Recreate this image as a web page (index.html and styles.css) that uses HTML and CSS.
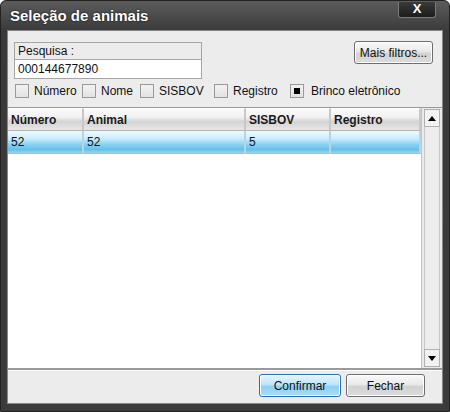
FILE: index.html
```html
<!DOCTYPE html>
<html>
<head>
<meta charset="utf-8">
<link rel="stylesheet" href="styles.css">
</head>
<body>
<div class="window">
  <div class="titlebar">
    <span class="title">Seleção de animais</span>
    <span class="close">X</span>
  </div>
  <div class="client">
    <div class="top">
      <div class="toprow">
        <div class="search">
          <div class="search-label">Pesquisa :</div>
          <div class="search-input">000144677890</div>
        </div>
        <button class="btn more">Mais filtros...</button>
      </div>
      <div class="checks">
        <span class="chk w1"><span class="box"></span>Número</span>
        <span class="chk w2"><span class="box"></span>Nome</span>
        <span class="chk w3"><span class="box"></span>SISBOV</span>
        <span class="chk w4"><span class="box"></span>Registro</span>
        <span class="chk"><span class="box checked"></span>Brinco eletrônico</span>
      </div>
    </div>
    <div class="grid">
      <div class="table">
        <div class="hrow">
          <div class="cell c1">Número</div>
          <div class="cell c2">Animal</div>
          <div class="cell c3">SISBOV</div>
          <div class="cell c4">Registro</div>
        </div>
        <div class="row sel">
          <div class="cell c1">52</div>
          <div class="cell c2">52</div>
          <div class="cell c3">5</div>
          <div class="cell c4"></div>
        </div>
      </div>
      <div class="scroll">
        <div class="arrow up"><span class="tri-up"></span></div>
        <div class="track"></div>
        <div class="arrow down"><span class="tri-down"></span></div>
      </div>
    </div>
    <div class="footer">
      <button class="btn confirm">Confirmar</button>
      <button class="btn close-btn">Fechar</button>
    </div>
  </div>
</div>
</body>
</html>
```
FILE: styles.css
```css
* { box-sizing: border-box; }
html, body { margin: 0; padding: 0; background: #ffffff; }
body { width: 450px; height: 412px; overflow: hidden; font-family: "Liberation Sans", Arial, sans-serif; }

.window {
  width: 450px; height: 412px;
  background: linear-gradient(#5c5c5c 0px, #3a3a3a 30px, #3b3b3b 100%);
  border: 1px solid #222;
  border-radius: 6px 6px 0 0;
  display: flex; flex-direction: column;
  padding: 0 6px 7px 6px;
}
.titlebar {
  height: 29px; flex: none;
  display: flex; align-items: flex-start; justify-content: space-between;
}
.title {
  color: #fff; font-weight: bold; font-size: 15px;
  margin: 6px 0 0 3px;
  text-shadow: 0 0 2px #000;
}
.close {
  width: 38px; height: 16px; margin: 1px 7px 0 0;
  background: linear-gradient(#3a3a3a, #1c1c1c);
  border: 1px solid #7a7a7a; border-top: none;
  border-radius: 0 0 3px 3px;
  color: #fff; font-weight: bold; font-size: 13px;
  text-align: center; line-height: 14px;
}
.client {
  flex: 1; background: #ececec;
  border: 1px solid #888;
  display: flex; flex-direction: column;
}
.top { padding: 11px 9px 0 6px; height: 76px; flex: none; }
.toprow { display: flex; justify-content: space-between; align-items: flex-start; }
.search {
  width: 188px; height: 37px;
  border: 1px solid #a6a6a6;
  background: #fff;
}
.search-label {
  height: 17px; background: #ececec; border-bottom: 1px solid #a6a6a6;
  font-size: 12px; color: #111; padding: 1px 0 0 3px; line-height: 15px;
}
.search-input { font-size: 12px; color: #111; padding: 1px 0 0 3px; line-height: 17px; }
.btn {
  font-family: "Liberation Sans", Arial, sans-serif;
  font-size: 12px; color: #111;
  border: 1px solid #6e6e6e; border-radius: 3px;
  background: linear-gradient(#fafafa 0%, #e9e9e9 45%, #d2d2d2 55%, #dcdcdc 100%);
  box-shadow: inset 0 0 0 1px #fff;
  padding: 0; margin: 0;
}
.more { width: 79px; height: 23px; margin-top: -1px; }
.checks { display: flex; align-items: center; margin-top: 3px; height: 17px; font-size: 12px; color: #111; padding-left: 1px; }
.chk { display: flex; align-items: center; flex: none; }
.w1 { width: 67px; }
.w2 { width: 58px; }
.w3 { width: 74px; }
.w4 { width: 76px; }
.box {
  width: 14px; height: 14px; border: 1px solid #9a9a9a;
  background: linear-gradient(#f2f2f2, #e2e2e2);
  margin: 0 5px 0 0; display: inline-flex; align-items: center; justify-content: center;
}
.box.checked { margin-right: 7px; }
.box.checked::after { content: ""; width: 6px; height: 6px; background: #000; }

.grid {
  flex: 1; display: flex; background: #fff;
  border-top: 1px solid #9a9a9a; border-bottom: 2px solid #9a9a9a;
}
.table { flex: 1; }
.hrow, .row { display: flex; }
.hrow { height: 23px; }
.hrow .cell {
  background: linear-gradient(#fafafa 0%, #f0f0f0 40%, #d4d4d4 60%, #e6e6e6 100%);
  border-right: 2px solid #c8c8c8; border-bottom: 1px solid #b4b4b4; border-top: 1px solid #fff;
  font-weight: bold; font-size: 12px; color: #1a1a1a;
  padding: 4px 0 0 3px;
}
.row { height: 23px; }
.row.sel .cell {
  background: linear-gradient(#eefaff 0%, #c9edfd 35%, #8ad2f3 60%, #66bfeb 85%, #9bd6f2 100%);
  border-right: 2px solid #b8d4e2; border-bottom: 1px solid #aeb9c0;
  font-size: 12px; color: #111; padding: 4px 0 0 3px;
}
.c1 { width: 76px; }
.c2 { width: 162px; }
.c3 { width: 85px; }
.c4 { flex: 1; }
.scroll {
  width: 21px; flex: none; display: flex; flex-direction: column;
  background: #eaeaea; border-left: 1px solid #c4c4c4;
  padding: 1px 2px;
}
.arrow {
  height: 18px; border: 1px solid #b0b0b0; background: #f2f2f2;
  display: flex; align-items: center; justify-content: center;
}
.track { flex: 1; border-left: 1px solid #c8c8c8; border-right: 1px solid #c8c8c8; background: #ededed; }
.tri-up { width: 0; height: 0; border-left: 4px solid transparent; border-right: 4px solid transparent; border-bottom: 5px solid #000; }
.tri-down { width: 0; height: 0; border-left: 4px solid transparent; border-right: 4px solid transparent; border-top: 5px solid #000; }

.footer {
  height: 33px; flex: none; display: flex; justify-content: flex-end; align-items: flex-start;
  padding: 3px 17px 0 0; gap: 5px;
  border-top: 1px solid #fff;
}
.confirm {
  width: 82px; height: 23px;
  border-color: #2d6fb0;
  background: linear-gradient(#e6f6ff 0%, #bde6fb 45%, #8fd0f4 55%, #a8dcf7 100%);
}
.close-btn { width: 79px; height: 23px; }
```
